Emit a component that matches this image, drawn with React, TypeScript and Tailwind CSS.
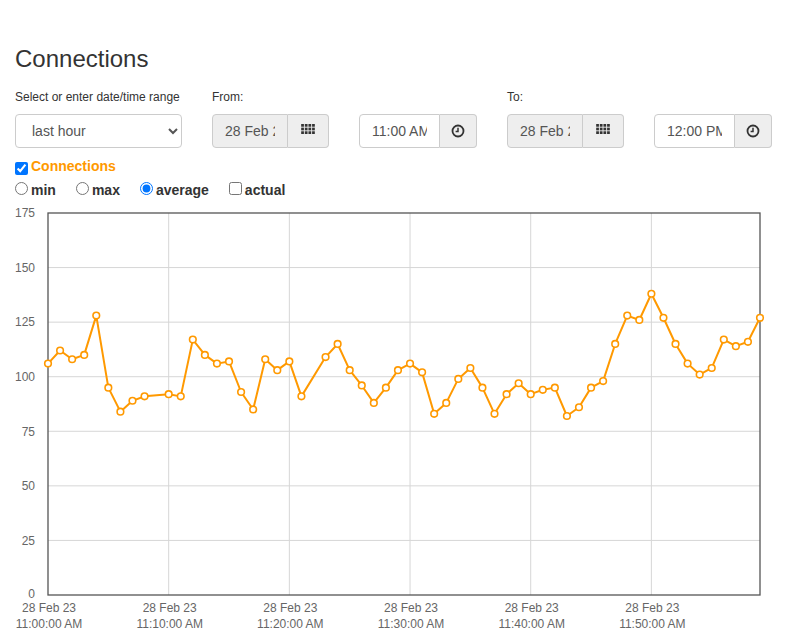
import React from 'react';

// [minute, average connections]
const series: [number, number][] = [
  [0, 106], [1, 112], [2, 108], [3, 110], [4, 128], [5, 95], [6, 84], [7, 89], [8, 91],
  [10, 92], [11, 91], [12, 117], [13, 110], [14, 106], [15, 107], [16, 93], [17, 85], [18, 108],
  [19, 103], [20, 107], [21, 91], [23, 109], [24, 115], [25, 103], [26, 96], [27, 88], [28, 95],
  [29, 103], [30, 106], [31, 102], [32, 83], [33, 88], [34, 99], [35, 104], [36, 95], [37, 83],
  [38, 92], [39, 97], [40, 92], [41, 94], [42, 95], [43, 82], [44, 86], [45, 95], [46, 98],
  [47, 115], [48, 128], [49, 126], [50, 138], [51, 127], [52, 115], [53, 106], [54, 101],
  [55, 104], [56, 117], [57, 114], [58, 116], [59, 127],
];

const X0 = 33;
const X1 = 745;
const Y_TOP = 13;
const Y_ZERO = 395;
const MAX = 175;
const ORANGE = '#ff9900';

const px = (m: number) => X0 + (m * (X1 - X0)) / 59;
const py = (v: number) => Y_ZERO - (v * (Y_ZERO - Y_TOP)) / MAX;

function GridIcon() {
  return (
    <svg width="14" height="10" viewBox="0 0 15 11" className="mb-[4px]" fill="#333">
      {[0, 4, 8].map((y) =>
        [0, 4, 8, 12].map((x) => <rect key={`${x}-${y}`} x={x} y={y} width="3" height="3" />)
      )}
    </svg>
  );
}

function ClockIcon() {
  return (
    <svg width="14" height="14" viewBox="0 0 14 14" fill="none" stroke="#333">
      <circle cx="7" cy="7" r="5.5" strokeWidth="1.8" />
      <path d="M7 3.8V7.4H4.6" strokeWidth="1.5" />
    </svg>
  );
}

function DateField() {
  return (
    <div className="flex h-[34px] w-[117px]">
      <input
        readOnly
        value="28 Feb 2023"
        className="h-full w-[76px] min-w-0 rounded-l-[4px] border border-[#ccc] bg-[#eee] px-[12px] text-[14px] text-[#555] outline-none"
      />
      <span className="flex w-[41px] items-center justify-center rounded-r-[4px] border border-l-0 border-[#ccc] bg-[#eee]">
        <GridIcon />
      </span>
    </div>
  );
}

function TimeField({ value }: { value: string }) {
  return (
    <div className="flex h-[34px] w-[118px]">
      <input
        defaultValue={value}
        className="h-full w-[81px] min-w-0 rounded-l-[4px] border border-[#ccc] bg-white px-[12px] text-[14px] text-[#555] outline-none"
      />
      <span className="flex w-[37px] items-center justify-center rounded-r-[4px] border border-l-0 border-[#ccc] bg-[#eee]">
        <ClockIcon />
      </span>
    </div>
  );
}

function Chart() {
  const points = series.map(([m, v]) => `${px(m)},${py(v)}`).join(' ');
  return (
    <svg width={772} height={432} className="block overflow-visible" fontSize="12" fill="#666">
      {[10, 20, 30, 40, 50].map((m) => (
        <line key={m} x1={px(m)} x2={px(m)} y1={Y_TOP} y2={Y_ZERO} stroke="#d6d6d6" strokeWidth="1" />
      ))}
      {[25, 50, 75, 100, 125, 150].map((v) => (
        <line key={v} x1={X0} x2={X1} y1={py(v)} y2={py(v)} stroke="#d6d6d6" strokeWidth="1" />
      ))}
      <rect x={X0} y={Y_TOP} width={X1 - X0} height={Y_ZERO - Y_TOP} fill="none" stroke="#555" strokeWidth="1.3" />

      {[0, 25, 50, 75, 100, 125, 150, 175].map((v) => (
        <text key={v} x={20} y={py(v) + (v === 0 ? 2.5 : 4.3)} textAnchor="end">
          {v}
        </text>
      ))}
      {[0, 10, 20, 30, 40, 50].map((m) => (
        <g key={m}>
          <text x={px(m) + 1} y={411.5} textAnchor="middle">
            28 Feb 23
          </text>
          <text x={px(m) + 1} y={427.5} textAnchor="middle">
            {`11:${m === 0 ? '00' : m}:00 AM`}
          </text>
        </g>
      ))}

      <polyline points={points} fill="none" stroke={ORANGE} strokeWidth="2" strokeLinejoin="round" />
      {series.map(([m, v]) => (
        <circle key={m} cx={px(m)} cy={py(v)} r="3.3" fill="#fff" stroke={ORANGE} strokeWidth="1.6" />
      ))}
    </svg>
  );
}

export default function App() {
  return (
    <div className="h-[634px] overflow-hidden bg-white font-['Liberation_Sans',Helvetica,Arial,sans-serif] text-[#333]">
      <div className="px-[15px] pt-[46px]">
        <h3 className="text-[24px] font-normal leading-[26px]">Connections</h3>

        {/* Range pickers */}
        <div className="mt-[17px] flex gap-[30px]">
          <div className="w-[167px]">
            <label className="mb-[8px] block h-[17px] text-[12px] leading-[17px]">
              Select or enter date/time range
            </label>
            <select
              defaultValue="hour"
              className="h-[34px] w-full rounded-[4px] border border-[#ccc] bg-white px-[12px] text-[14px] text-[#555] outline-none"
            >
              <option value="hour">last hour</option>
              <option value="day">last day</option>
              <option value="week">last week</option>
              <option value="custom">custom</option>
            </select>
          </div>
          <div className="w-[265px]">
            <label className="mb-[8px] block h-[17px] text-[12px] leading-[17px]">From:</label>
            <div className="flex gap-[30px]">
              <DateField />
              <TimeField value="11:00 AM" />
            </div>
          </div>
          <div className="w-[265px]">
            <label className="mb-[8px] block h-[17px] text-[12px] leading-[17px]">To:</label>
            <div className="flex gap-[30px]">
              <DateField />
              <TimeField value="12:00 PM" />
            </div>
          </div>
        </div>

        {/* Series toggle */}
        <label className="mt-[8px] flex h-[20px] items-start gap-[3px] text-[14px] font-bold leading-[20px] text-[#ff9900]">
          <input type="checkbox" defaultChecked className="m-0 mt-[6px] h-[13px] w-[13px]" />
          Connections
        </label>

        {/* Aggregation */}
        <div className="mt-[4px] flex h-[20px] items-start gap-[20px] text-[14px] font-bold leading-[20px]">
          {['min', 'max', 'average'].map((name) => (
            <label key={name} className="flex items-start gap-[3px]">
              <input
                type="radio"
                name="agg"
                defaultChecked={name === 'average'}
                className="m-0 mt-[2px] h-[13px] w-[13px]"
              />
              {name}
            </label>
          ))}
          <label className="flex items-start gap-[3px]">
            <input type="checkbox" className="m-0 mt-[2px] h-[13px] w-[13px]" />
            actual
          </label>
        </div>

        <Chart />
      </div>
    </div>
  );
}
